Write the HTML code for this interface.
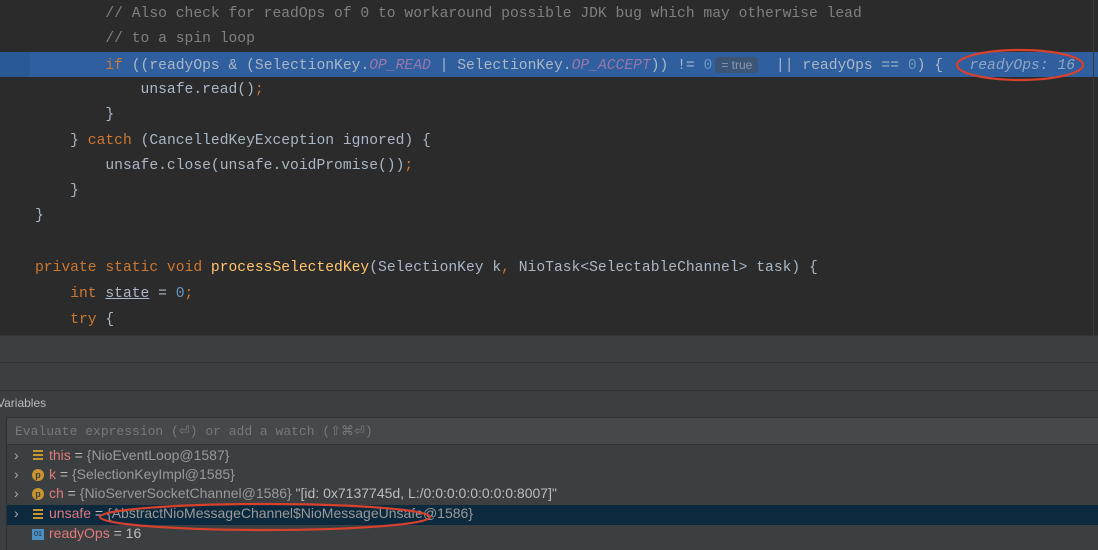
<!DOCTYPE html>
<html><head><style>
*{margin:0;padding:0;box-sizing:border-box}
body{width:1098px;height:550px;overflow:hidden;background:#2b2b2b;font-family:"Liberation Mono",monospace;position:relative}
.ed{position:absolute;left:0;top:0;width:1098px;height:335px;background:#2b2b2b}
.ln{position:absolute;left:35px;height:25.5px;line-height:25.5px;font-size:14.67px;color:#a9b7c6;white-space:pre}
.k{color:#cc7832}.c{color:#808080}.n{color:#6897bb}.f{color:#9876aa;font-style:italic}.m{color:#ffc66d}
.hl{position:absolute;left:0;top:52px;width:1098px;height:25px;background:#2f5f9f}
.t{position:absolute;font-family:"Liberation Sans",sans-serif;font-size:14px;color:#bbb;white-space:pre}
.row{position:absolute;left:0;width:1098px;height:20px}
</style></head><body>
<div class="ed">
<div class="hl"></div>
<div style="position:absolute;left:0;top:52px;width:30px;height:25px;background:#2a5a96"></div>
<div style="position:absolute;left:1093px;top:0;width:1px;height:335px;background:#3a3a3a"></div>
<div class="ln" style="top:2px"><span class="c">        // Also check for readOps of 0 to workaround possible JDK bug which may otherwise lead</span></div>
<div class="ln" style="top:27px"><span class="c">        // to a spin loop</span></div>
<div class="ln" style="top:53px">        <span class="k">if </span>((readyOps &amp; (SelectionKey.<span class="f">OP_READ</span> | SelectionKey.<span class="f">OP_ACCEPT</span>)) != <span class="n">0</span><span style="background:#3c5577;color:#8a9bb0;font-family:'Liberation Sans',sans-serif;font-size:12px;border-radius:3px;padding:1px 6px;margin-left:3px">= true</span>  || readyOps == <span class="n">0</span>) {   <span style="color:#8fa6c4;font-style:italic">readyOps: 16</span></div>
<div class="ln" style="top:78px">            unsafe.read()<span class="k">;</span></div>
<div class="ln" style="top:103px">        }</div>
<div class="ln" style="top:129px">    } <span class="k">catch </span>(CancelledKeyException ignored) {</div>
<div class="ln" style="top:154px">        unsafe.close(unsafe.voidPromise())<span class="k">;</span></div>
<div class="ln" style="top:179px">    }</div>
<div class="ln" style="top:204px">}</div>
<div class="ln" style="top:256px"><span class="k">private static void </span><span class="m">processSelectedKey</span>(SelectionKey k<span class="k">, </span>NioTask&lt;SelectableChannel&gt; task) {</div>
<div class="ln" style="top:282px">    <span class="k">int </span><span style="text-decoration:underline">state</span> = <span class="n">0</span><span class="k">;</span></div>
<div class="ln" style="top:308px">    <span class="k">try </span>{</div>
</div>
<svg style="position:absolute;left:952px;top:46px" width="136" height="40"><ellipse cx="68" cy="19" rx="63" ry="15" fill="none" stroke="#d8412c" stroke-width="2.2"/></svg>
<div style="position:absolute;left:0;top:335px;width:1098px;height:27px;background:#3c3f41;border-top:1px solid #323232"></div>
<div style="position:absolute;left:0;top:362px;width:1098px;height:28px;background:#3c3f41;border-top:1px solid #333"></div>
<div style="position:absolute;left:0;top:390px;width:1098px;height:160px;background:#3c3f41;border-top:1px solid #333"></div>
<div class="t" style="left:-3px;top:396px;font-size:12px;color:#bbb">Variables</div>
<div style="position:absolute;left:6px;top:417px;width:1092px;height:133px;background:#3c3f41;border-left:1px solid #2f2f2f;border-top:1px solid #323232"></div>
<div style="position:absolute;left:7px;top:418px;width:1091px;height:27px;background:#45494a;border-bottom:1px solid #333"></div>
<div style="position:absolute;left:15px;top:424px;font-size:13px;color:#787878;white-space:pre">Evaluate expression (⏎) or add a watch (⇧⌘⏎)</div>
<div class="row" style="top:505px;background:#0d293e;left:7px"></div>
<div class="t" style="left:14px;top:447px;color:#aaa">›</div>
<div class="t" style="left:14px;top:466px;color:#aaa">›</div>
<div class="t" style="left:14px;top:485px;color:#aaa">›</div>
<div class="t" style="left:14px;top:505px;color:#aaa">›</div>
<div style="position:absolute;left:33px;top:450px;width:10px;height:10px;background:repeating-linear-gradient(#c8952f 0 2px,transparent 2px 4px)"></div>
<div style="position:absolute;left:32px;top:469px;width:12px;height:12px;border-radius:50%;background:#c8952f;color:#3c3f41;font:bold 9px 'Liberation Sans';text-align:center;line-height:12px">p</div>
<div style="position:absolute;left:32px;top:488px;width:12px;height:12px;border-radius:50%;background:#c8952f;color:#3c3f41;font:bold 9px 'Liberation Sans';text-align:center;line-height:12px">p</div>
<div style="position:absolute;left:33px;top:509px;width:10px;height:10px;background:repeating-linear-gradient(#c8952f 0 2px,transparent 2px 4px)"></div>
<div style="position:absolute;left:32px;top:529px;width:12px;height:11px;background:#4a8fc2;color:#2b2b2b;font:7px 'Liberation Sans';text-align:center;line-height:11px">01</div>
<div class="t" style="left:49px;top:447px"><span style="color:#e07a7a">this</span> = <span style="color:#999">{NioEventLoop@1587}</span></div>
<div class="t" style="left:49px;top:466px"><span style="color:#e07a7a">k</span> = <span style="color:#999">{SelectionKeyImpl@1585}</span></div>
<div class="t" style="left:49px;top:485px"><span style="color:#e07a7a">ch</span> = <span style="color:#999">{NioServerSocketChannel@1586}</span> "[id: 0x7137745d, L:/0:0:0:0:0:0:0:0:8007]"</div>
<div class="t" style="left:49px;top:505px"><span style="color:#e07a7a">unsafe</span> = <span style="color:#999">{AbstractNioMessageChannel$NioMessageUnsafe@1586}</span></div>
<div class="t" style="left:49px;top:525px"><span style="color:#e07a7a">readyOps</span> = 16</div>
<svg style="position:absolute;left:95px;top:500px" width="340" height="36"><ellipse cx="170" cy="17" rx="165" ry="13" fill="none" stroke="#d8412c" stroke-width="2.2"/></svg>
</body></html>
